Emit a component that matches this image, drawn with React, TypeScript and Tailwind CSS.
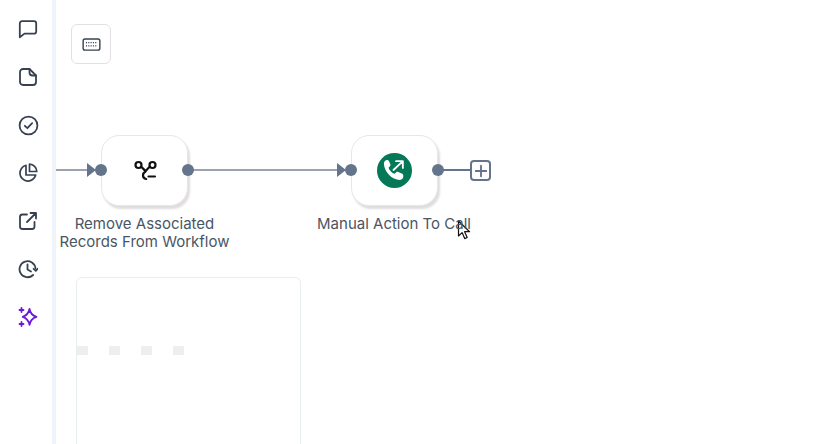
import React from "react";

const railIcon = "w-5 h-5 text-[#374151]";

const Chat = () => (
  <svg viewBox="0 0 20 20" fill="none" stroke="currentColor" strokeWidth="1.800" strokeLinejoin="round" strokeLinecap="round" className={railIcon}>
    <path d="M4 2.200h12a2.200 2.200 0 0 1 2.200 2.200v8a2.200 2.200 0 0 1-2.200 2.200H6.500L1.800 18.200V4.400A2.200 2.200 0 0 1 4 2.200z" />
  </svg>
);
const Note = () => (
  <svg viewBox="0 0 20 20" fill="none" stroke="currentColor" strokeWidth="1.800" strokeLinejoin="round" strokeLinecap="round" className={railIcon}>
    <path d="M5 2h6.500L18 8.500V15a3 3 0 0 1-3 3H5a3 3 0 0 1-3-3V5a3 3 0 0 1 3-3z" />
    <path d="M11.500 2v3.500a3 3 0 0 0 3 3H18" />
  </svg>
);
const Check = () => (
  <svg viewBox="0 0 20 20" fill="none" stroke="currentColor" strokeWidth="1.700" strokeLinecap="round" strokeLinejoin="round" className="w-[21px] h-[21px] text-[#374151] my-[-0.5px]">
    <circle cx="10" cy="10" r="8.500" />
    <path d="M6.500 10.300l2.400 2.300 4.600-4.800" />
  </svg>
);
const Pie = () => (
  <svg viewBox="0 0 20 20" fill="none" stroke="currentColor" strokeWidth="1.700" strokeLinejoin="round" strokeLinecap="round" className={railIcon}>
    <path d="M8 2.300a8 8 0 1 0 9.700 9.700H8z" />
    <path d="M11.500 1.200a7.500 7.500 0 0 1 7.300 7.300h-7.300z" />
  </svg>
);
const External = () => (
  <svg viewBox="0 0 20 20" fill="none" stroke="currentColor" strokeWidth="1.800" strokeLinejoin="round" strokeLinecap="round" className={railIcon}>
    <path d="M9 3.500H4.500A2.500 2.500 0 0 0 2 6v9.500A2.500 2.500 0 0 0 4.500 18H14a2.500 2.500 0 0 0 2.500-2.500V11" />
    <path d="M9 11l9-9M12.500 2H18v5.500" />
  </svg>
);
const Clock = () => (
  <svg viewBox="0 0 20 20" fill="none" stroke="currentColor" strokeWidth="1.800" strokeLinejoin="round" strokeLinecap="round" className={railIcon}>
    <path d="M17.500 9.500a8 8 0 1 0-2.400 6.500" />
    <path d="M9.500 5.500v5l3.500 2" />
    <path d="M15.600 9.800l2.200 2 2-2.200" />
  </svg>
);
const Sparkle = () => (
  <svg viewBox="0 0 20 20" fill="none" stroke="#6d17e0" strokeWidth="1.800" strokeLinejoin="round" strokeLinecap="round" className="w-5 h-5">
    <path d="M11.500 2c.7 4.400 2.500 6.400 7 7.800-4.500 1.400-6.300 3.400-7 8-.9-4.600-2.700-6.600-6.800-8 4.100-1.400 5.900-3.400 6.800-7.800z" />
    <path d="M3.500 1v4M1.500 3h4M3.500 15v4M1.500 17h4" />
  </svg>
);

const Keyboard = () => (
  <svg viewBox="0 0 20 14" fill="none" className="w-[19px] h-[13px]" stroke="#374151">
    <rect x="1" y="1" width="18" height="12" rx="2" strokeWidth="1.500" />
    <path d="M4 5h12M4 8.500h12" strokeWidth="1.200" strokeDasharray="1.200 1.300" />
  </svg>
);

const Branch = () => (
  <svg viewBox="0 0 24 24" fill="none" stroke="#111" strokeWidth="2.200" strokeLinecap="round" strokeLinejoin="round" className="w-6 h-6 -mt-[2px]">
    <circle cx="5.500" cy="7" r="3" />
    <circle cx="19.500" cy="7" r="3" />
    <path d="M8.500 9c1.500 1.300 3 2.500 4 4.500 1-1.700 2.500-3 4-4.500M12.500 13.500c-1.500 1-2.500 2.200-2.500 3.700 0 2 1.200 3.500 3.200 3.800M15.500 18.500h6.500" />
  </svg>
);

const Phone = () => (
  <div className="w-[35px] h-[35px] rounded-full bg-[#047857] flex items-center justify-center -mt-px">
    <svg viewBox="0 0 24 24" fill="none" className="w-[25px] h-[25px]">
      <path d="M5 1.800c.8 0 1.300.3 1.600 1l1.500 3.500c.2.600.1 1-.3 1.400L6.300 9.300c.8 2.600 3.200 5 5.700 5.900l1.700-1.600c.4-.4.900-.5 1.400-.3l4.300 1.900c.8.300 1 .9 1 1.600v1.200c0 1.500-1.500 3-3.200 3C9.500 21 2 13 1.800 5.200 1.800 3.300 3.300 1.800 5 1.800z" fill="#fff" />
      <path d="M11 11.500L19.500 3.500M13.500 3h6.500v6.500" stroke="#fff" strokeWidth="1.800" strokeLinecap="round" strokeLinejoin="round" />
    </svg>
  </div>
);

const Node = ({ children, label }: { children: React.ReactNode; label: React.ReactNode }) => (
  <div className="relative w-[87px] h-[71px] shrink-0 flex items-center justify-center bg-white rounded-[18px] border border-[#e5e7eb] shadow-[2px_3px_2px_rgba(120,100,110,0.22)]">
    {children}
    <div className="absolute -left-[7px] top-[28px] w-3 h-3 rounded-full bg-[#64748b]" />
    <div className="absolute -right-[7px] top-[28px] w-3 h-3 rounded-full bg-[#64748b]" />
    <p className="absolute left-1/2 -translate-x-1/2 top-[79px] w-[200px] text-center text-[15px] leading-[18px] text-[#4b5563]">
      {label}
    </p>
  </div>
);

const Arrow = () => (
  <div className="w-0 h-0 shrink-0 -mt-px mr-[5px] border-y-[7px] border-y-transparent border-l-[9px] border-l-[#64748b]" />
);

const Dash = () => <div className="w-[11px] h-[9px] bg-[#eeeeee]" />;

export default function App() {
  return (
    <div className="flex w-[830px] h-[444px] overflow-hidden bg-white font-['Inter',sans-serif]">
      <aside className="w-[56px] h-full shrink-0 border-r-4 border-[#eef4fa] flex flex-col items-center gap-7 pt-[19px] pl-1">
        <Chat />
        <Note />
        <Check />
        <Pie />
        <External />
        <Clock />
        <Sparkle />
      </aside>

      <main className="flex-1 flex flex-col pt-6">
        <button className="ml-[15px] w-10 h-10 shrink-0 flex items-center justify-center rounded-md border border-[#e2e0e4] bg-white">
          <Keyboard />
        </button>

        <div className="mt-[71px] flex items-center h-[71px] shrink-0">
          <div className="w-[31px] h-0.5 -mt-px bg-[#9ca3af]" />
          <Arrow />
          <Node label={<>Remove Associated<br />Records From Workflow</>}>
            <Branch />
          </Node>
          <div className="w-[148.5px] h-0.5 -mt-px bg-[#9ca3af]" />
          <Arrow />
          <Node label="Manual Action To Call">
            <Phone />
          </Node>
          <div className="w-[32.5px] h-0.5 -mt-px bg-[#64748b]" />
          <div className="w-[21px] h-[21px] rounded-[4px] border-2 border-[#64748b] bg-white flex items-center justify-center">
            <svg viewBox="0 0 12 12" className="w-[14px] h-[14px]" stroke="#64748b" strokeWidth="1.600" strokeLinecap="round">
              <path d="M6 1.500v9M1.500 6h9" />
            </svg>
          </div>
          {/* mouse pointer */}
          <svg viewBox="0 0 14 20" className="w-[14px] h-5 self-start mt-[85px] -ml-[34px]">
            <path d="M1.500 1v15l3.600-3.400 2.600 6 2.500-1.100-2.600-5.800h5z" fill="#fff" stroke="#111" strokeWidth="1.200" strokeLinejoin="round" />
          </svg>
        </div>

        <div className="ml-5 mt-[71px] w-[225px] h-[190px] shrink-0 rounded-md border border-[#e8eeee] bg-white pt-[68px]">
          <div className="flex gap-[21px]">
            <Dash />
            <Dash />
            <Dash />
            <Dash />
          </div>
        </div>
      </main>
    </div>
  );
}
